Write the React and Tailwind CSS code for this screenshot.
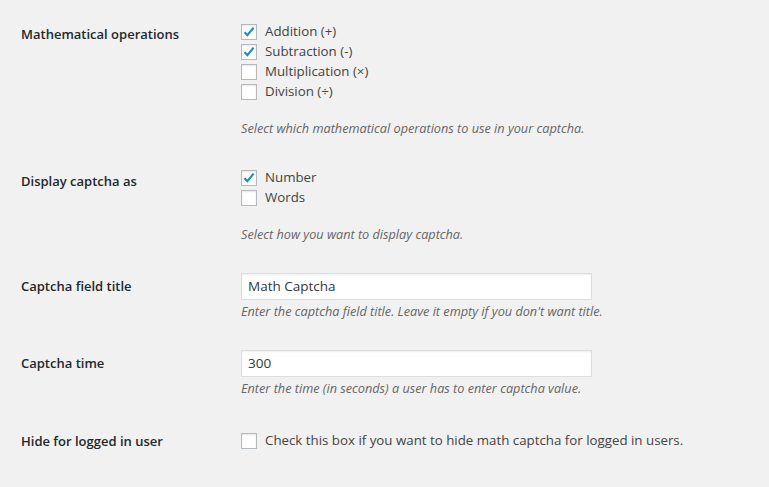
import React from "react";

const font = { fontFamily: '"Open Sans", "Noto Sans", sans-serif' };

function Box({ checked }) {
  return (
    <span className="relative inline-block w-4 h-4 shrink-0 bg-white border border-[#b4b9be] shadow-[inset_0_1px_2px_rgba(0,0,0,0.1)]">
      {checked && (
        <svg viewBox="0 0 16 16" className="absolute -left-px -top-px w-4 h-4">
          <path d="M3.6 8.2 L6.4 11.2 L12.6 3.6" fill="none" stroke="#1e8cbe" strokeWidth="2.2" strokeLinecap="butt" strokeLinejoin="miter" />
        </svg>
      )}
    </span>
  );
}

function Check({ checked, children }) {
  return (
    <div className="flex items-center h-5 gap-2 text-[13.3px] text-[#444]">
      <Box checked={checked} />
      <span>{children}</span>
    </div>
  );
}

function Row({ label, labelOffset, children, center, mb = "mb-[30px]" }) {
  return (
    <div className={"flex " + mb + " " + (center ? "items-center" : "")}>
      <div className="w-[241px] pl-[21px] shrink-0" style={center ? {} : { paddingTop: labelOffset }}>
        <div className="text-[13px] font-semibold text-[#23282d] leading-[18px]">{label}</div>
      </div>
      <div className="flex flex-col">{children}</div>
    </div>
  );
}

function Desc({ children, className = "" }) {
  return <p className={"text-[12.7px] italic text-[#666] leading-[17px] " + className}>{children}</p>;
}

function Input({ value }) {
  return (
    <div className="w-[351px] h-[27px] bg-white border border-[#ddd] shadow-[inset_0_1px_2px_rgba(0,0,0,0.07)] flex items-center px-[6px] text-[13.5px] text-[#32373c]">
      {value}
    </div>
  );
}

export default function App() {
  return (
    <div className="min-h-[487px] w-full bg-[#f1f1f1] pt-[22px]" style={font}>
      <Row label="Mathematical operations" labelOffset={3} mb="mb-[31px]">
        <Check checked>Addition (+)</Check>
        <Check checked>Subtraction (-)</Check>
        <Check>Multiplication (×)</Check>
        <Check>Division (÷)</Check>
        <Desc className="mt-[18px]">Select which mathematical operations to use in your captcha.</Desc>
      </Row>
      <Row label="Display captcha as" labelOffset={4}>
        <Check checked>Number</Check>
        <Check>Words</Check>
        <Desc className="mt-[18px]">Select how you want to display captcha.</Desc>
      </Row>
      <Row label="Captcha field title" labelOffset={4}>
        <Input value="Math Captcha" />
        <Desc className="mt-[3px]">Enter the captcha field title. Leave it empty if you don't want title.</Desc>
      </Row>
      <Row label="Captcha time" labelOffset={4}>
        <Input value="300" />
        <Desc className="mt-[3px]">Enter the time (in seconds) a user has to enter captcha value.</Desc>
      </Row>
      <div className="h-[4px]" />
      <Row label="Hide for logged in user" center>
        <Check>Check this box if you want to hide math captcha for logged in users.</Check>
      </Row>
    </div>
  );
}
